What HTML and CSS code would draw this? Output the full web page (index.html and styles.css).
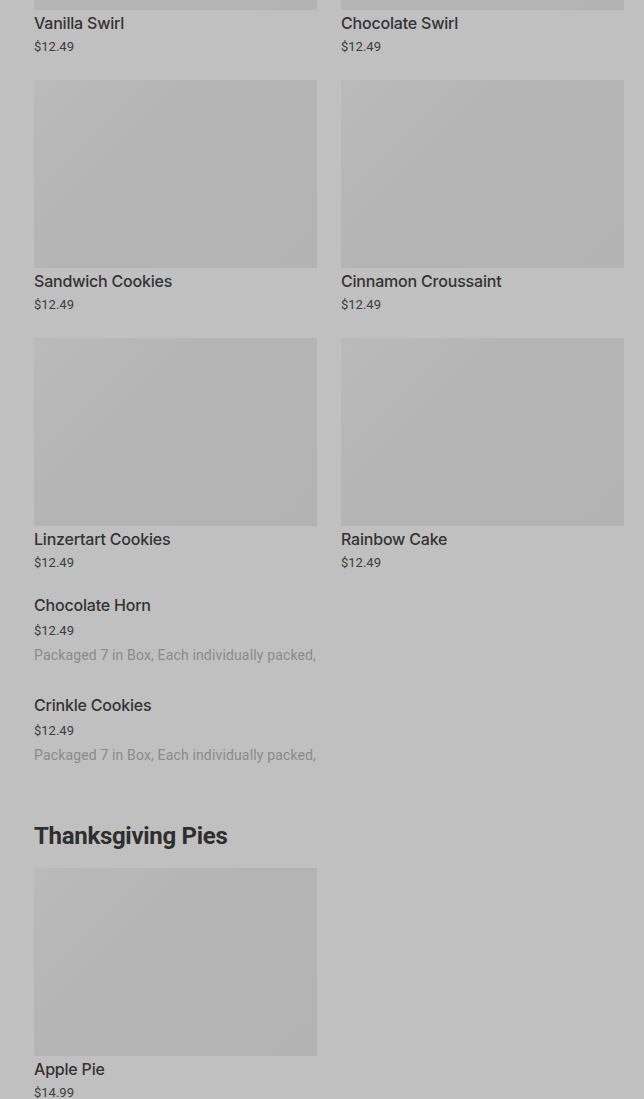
FILE: index.html
```html
<!DOCTYPE html>
<html lang="en">
<head>
<meta charset="utf-8">
<title>Menu</title>
<link rel="stylesheet" href="styles.css">
</head>
<body>
<main class="menu">
  <section class="section section--first">
    <ul class="grid">
      <li class="card">
        <div class="card__img"></div>
        <h3 class="card__name">Vanilla Swirl</h3>
        <p class="card__price">$12.49</p>
      </li>
      <li class="card">
        <div class="card__img"></div>
        <h3 class="card__name">Chocolate Swirl</h3>
        <p class="card__price">$12.49</p>
      </li>
      <li class="card">
        <div class="card__img"></div>
        <h3 class="card__name">Sandwich Cookies</h3>
        <p class="card__price">$12.49</p>
      </li>
      <li class="card">
        <div class="card__img"></div>
        <h3 class="card__name">Cinnamon Croussaint</h3>
        <p class="card__price">$12.49</p>
      </li>
      <li class="card">
        <div class="card__img"></div>
        <h3 class="card__name">Linzertart Cookies</h3>
        <p class="card__price">$12.49</p>
      </li>
      <li class="card">
        <div class="card__img"></div>
        <h3 class="card__name">Rainbow Cake</h3>
        <p class="card__price">$12.49</p>
      </li>
      <li class="item">
        <h3 class="item__name">Chocolate Horn</h3>
        <p class="item__price">$12.49</p>
        <p class="item__desc">Packaged 7 in Box, Each individually packed,</p>
      </li>
      <li class="item">
        <h3 class="item__name">Crinkle Cookies</h3>
        <p class="item__price">$12.49</p>
        <p class="item__desc">Packaged 7 in Box, Each individually packed,</p>
      </li>
    </ul>
  </section>
  <section class="section">
    <h2 class="section__title">Thanksgiving Pies</h2>
    <ul class="grid">
      <li class="card">
        <div class="card__img"></div>
        <h3 class="card__name">Apple Pie</h3>
        <p class="card__price">$14.99</p>
      </li>
    </ul>
  </section>
</main>
</body>
</html>
```

FILE: styles.css
```css
* {
  box-sizing: border-box;
}

html, body {
  margin: 0;
  padding: 0;
  background: #c0c0c0;
}

body {
  font-family: Roboto, "Noto Sans", sans-serif;
  color: #303030;
  overflow: hidden;
}

.menu {
  padding: 0 20px 0 34px;
  margin-top: -178px;
}

.grid {
  list-style: none;
  margin: 0;
  padding: 0;
  display: grid;
  grid-template-columns: 1fr 1fr;
  column-gap: 24px;
  row-gap: 24px;
}

.card {
  display: flex;
  flex-direction: column;
}

.card__img {
  height: 188px;
  background: linear-gradient(135deg, #bababa 0%, #b4b4b4 45%, #b3b3b3 100%);
}

.card__name,
.item__name {
  margin: 3px 0 0;
  font-family: Inter, Roboto, sans-serif;
  font-size: 16px;
  line-height: 20px;
  font-weight: 500;
  letter-spacing: -0.2px;
  color: #333333;
}

.card__price,
.item__price {
  margin: 4px 0 0;
  font-size: 13px;
  line-height: 19px;
  color: #3c3c3c;
}

.item {
  grid-column: 1;
  margin-top: -1px;
  padding-bottom: 7px;
}

.item__name {
  margin: 0;
}

.item__price {
  margin-top: 6px;
  line-height: 20px;
}

.item__desc {
  margin: 4px 0 0;
  font-size: 14px;
  line-height: 20px;
  letter-spacing: 0.15px;
  white-space: nowrap;
  color: #8a8a8a;
}

.section__title {
  margin: 48px 0 16px;
  font-size: 24px;
  line-height: 32px;
  font-weight: 700;
  letter-spacing: -0.3px;
  color: #2e2e2e;
}
```
